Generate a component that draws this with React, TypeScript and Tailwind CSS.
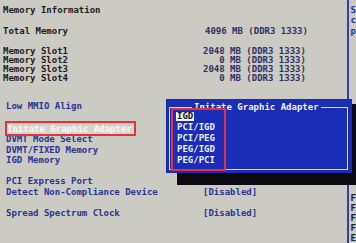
const mono = { fontFamily: '"DejaVu Sans Mono", "Liberation Mono", monospace' };

const options = ["IGD", "PCI/IGD", "PCI/PEG", "PEG/IGD", "PEG/PCI"];

const slots = [
  ["Memory Slot1", "2048 MB (DDR3 1333)"],
  ["Memory Slot2", "   0 MB (DDR3 1333)"],
  ["Memory Slot3", "2048 MB (DDR3 1333)"],
  ["Memory Slot4", "   0 MB (DDR3 1333)"],
];

const App = () => {
  return (
    <div
      className="relative h-[243px] w-[356px] overflow-hidden bg-[#cbcbc3] text-[9px] font-bold leading-none"
      style={mono}
    >
      <div className="flex h-full">
        {/* main setup list */}
        <div className="flex w-[348px] flex-col whitespace-pre">
          <div className="mt-[5px] flex h-[10px] items-center pl-[3px] text-[#1c1c22]">Memory Information</div>
          <div className="mt-[11px] flex h-[10px] items-center text-[#1c1c22]">
            <span className="w-[205px] pl-[3px]">Total Memory</span>
            <span className="text-[#2d3066]">4096 MB (DDR3 1333)</span>
          </div>
          <div className="mt-[11px] flex flex-col text-[#1c1c22]">
            {slots.map(([label, value]) => (
              <div key={label} className="flex h-[9px] items-center">
                <span className="w-[203px] pl-[3px]">{label}</span>
                <span className="text-[#2d3066]">{value}</span>
              </div>
            ))}
          </div>

          <div className="mt-[18px] flex h-[10px] items-center pl-[6px] text-[#2a3494]">Low MMIO Align</div>
          <div className="mt-[13px] flex h-[10px] items-center pl-[6px]">
            <span className="bg-[#d6d6ce] pl-[1px] pr-[4px] text-[#f8f8f4]">Initate Graphic Adapter</span>
          </div>
          <div className="flex h-[10px] items-center pl-[6px] text-[#2a3494]">DVMT Mode Select</div>
          <div className="mt-[1px] flex h-[10px] items-center pl-[6px] text-[#2a3494]">DVMT/FIXED Memory</div>
          <div className="flex h-[10px] items-center pl-[6px] text-[#2a3494]">IGD Memory</div>

          <div className="mt-[11px] flex h-[10px] items-center pl-[6px] text-[#2a3494]">PCI Express Port</div>
          <div className="mt-[1px] flex h-[10px] items-center text-[#2a3494]">
            <span className="w-[203px] pl-[6px]">Detect Non-Compliance Device</span>
            <span>[Disabled]</span>
          </div>
          <div className="mt-[11px] flex h-[10px] items-center text-[#2a3494]">
            <span className="w-[203px] pl-[6px]">Spread Spectrum Clock</span>
            <span>[Disabled]</span>
          </div>
        </div>

        {/* help column */}
        <div className="flex flex-1 flex-col border-l-2 border-[#3340a8] pl-[2px]">
          <div className="mt-[5px] flex h-[10px] items-center text-[#2a3494]">S</div>
          <div className="flex h-[10px] items-center text-[#2a3494]">c</div>
          <div className="mt-[1px] flex h-[10px] items-center text-[#2a3494]">p</div>
          <div className="mt-[157px] flex flex-col text-[#1c1c22]">
            <div className="flex h-[10px] items-center">F</div>
            <div className="flex h-[10px] items-center">F</div>
            <div className="flex h-[10px] items-center">F</div>
            <div className="flex h-[10px] items-center">F</div>
            <div className="flex h-[10px] items-center">E</div>
          </div>
        </div>
      </div>

      {/* popup shadow */}
      <div className="absolute left-[177px] top-[173px] h-[12px] w-[177px] bg-[#0a0a10]" />
      <div className="absolute left-[351px] top-[104px] h-[81px] w-[5px] bg-[#0a0a10]" />

      {/* popup */}
      <div className="absolute left-[166px] top-[99px] h-[74px] w-[186px] bg-[#1b2cb6]">
        <div className="absolute left-[3px] right-[4px] top-[8px] bottom-[3px] border border-[#d4dcff]" />
        <div className="absolute left-[26px] top-[3px] flex h-[10px] items-center bg-[#1b2cb6] px-[2px] text-[#f2f4ff]">
          Initate Graphic Adapter
        </div>
        <div className="absolute left-[10px] top-[12px] flex flex-col">
          {options.map((opt, i) => (
            <div key={opt} className="flex h-[11px] items-center">
              <span
                className={
                  i === 0
                    ? "bg-[#f4f4f4] px-[1px] text-[#101018]"
                    : "px-[1px] text-[#eef0ff]"
                }
              >
                {opt}
              </span>
            </div>
          ))}
        </div>
      </div>

      {/* red highlight boxes */}
      <div className="absolute left-[5px] top-[121px] h-[15px] w-[131px] border-2 border-[#e2323c]" />
      <div className="absolute left-[171px] top-[108px] h-[63px] w-[55px] border-2 border-[#e2323c]" />
    </div>
  );
};

export default App;
